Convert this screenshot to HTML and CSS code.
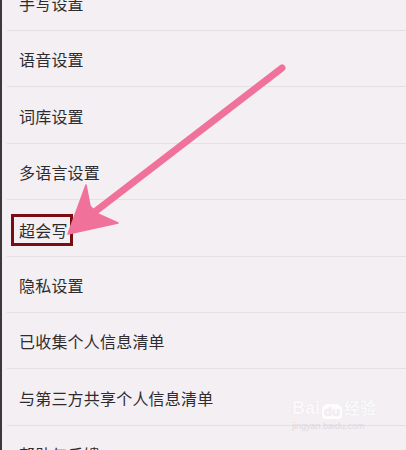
FILE: index.html
```html
<!DOCTYPE html>
<html>
<head>
<meta charset="utf-8">
<link rel="stylesheet" href="styles.css">
</head>
<body>
<div class="screen">
  <ul class="list">
    <li class="row">手写设置</li>
    <li class="row">语音设置</li>
    <li class="row">词库设置</li>
    <li class="row">多语言设置</li>
    <li class="row"><span class="mark">超会写</span></li>
    <li class="row">隐私设置</li>
    <li class="row">已收集个人信息清单</li>
    <li class="row">与第三方共享个人信息清单</li>
    <li class="row">帮助与反馈</li>
  </ul>
  <svg class="arrow" width="406" height="450" viewBox="0 0 406 450">
    <line x1="282" y1="68" x2="92" y2="214" stroke="#f0719a" stroke-width="7" stroke-linecap="round"/>
    <polygon points="68,234 86,185 90,206 98,214 118,223" fill="#f0719a" stroke="#f0719a" stroke-width="1.5" stroke-linejoin="round"/>
  </svg>
  <div class="watermark">
    <div class="wm-top"><span class="wm-bai">Bai</span><span class="wm-du">du</span><span class="wm-jy">经验</span></div>
    <div class="wm-url">jingyan.baidu.com</div>
  </div>
</div>
</body>
</html>
```
FILE: styles.css
```css
html, body {
  margin: 0;
  padding: 0;
}
body {
  background: #f3eff3;
  font-family: "Noto Sans CJK SC", "Noto Sans", sans-serif;
}
.screen {
  position: relative;
  width: 406px;
  height: 450px;
  overflow: hidden;
  box-sizing: border-box;
  border-left: 2px solid #3a3a3a;
  background: #f3eff3;
}
.list {
  list-style: none;
  margin: -25.4px 0 0 0;
  padding: 0;
}
.row {
  position: relative;
  box-sizing: border-box;
  height: 56.4px;
  display: flex;
  align-items: center;
  padding-left: 17px;
  font-size: 16px;
  color: #2e2c2e;
  letter-spacing: 0.2px;
}
.row::after {
  content: "";
  position: absolute;
  left: 5px;
  right: 0;
  bottom: 0;
  height: 1px;
  background: #e4e0e4;
}
.mark {
  margin-left: -8px;
  margin-top: 3px;
  padding: 2px 2px 2px 5px;
  border: 3px solid #7a0d12;
  line-height: 22px;
}
.arrow {
  position: absolute;
  left: -2px;
  top: 0;
}
.watermark {
  position: absolute;
  left: 290px;
  top: 395px;
  color: rgba(255,255,255,0.85);
  font-family: "Liberation Sans", sans-serif;
}
.wm-top {
  display: flex;
  align-items: flex-end;
  font-size: 18px;
  font-weight: bold;
  text-shadow: 0 0 1px #e0dce0;
}
.wm-du {
  background: rgba(255,255,255,0.85);
  color: #f3eff3;
  border-radius: 6px 6px 4px 4px;
  padding: 0 2px;
  font-size: 13px;
  margin: 0 2px;
}
.wm-jy {
  font-family: "Noto Sans CJK SC", sans-serif;
  font-size: 16px;
}
.wm-url {
  font-size: 9px;
  color: rgba(220,214,220,0.9);
  margin-top: 2px;
}
```
